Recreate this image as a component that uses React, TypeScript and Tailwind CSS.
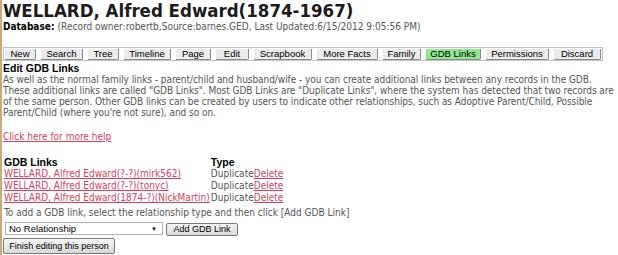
// @ts-nocheck
import React from 'react';

const tabs = [
  { label: 'New', w: 'w-[31px]' },
  { label: 'Search', w: 'w-[42px]' },
  { label: 'Tree', w: 'w-[31px]' },
  { label: 'Timeline', w: 'w-[47px]' },
  { label: 'Page', w: 'w-[35px]' },
  { label: 'Edit', w: 'w-[33px]' },
  { label: 'Scrapbook', w: 'w-[58px]' },
  { label: 'More Facts', w: 'w-[61px]' },
  { label: 'Family', w: 'w-[38px]' },
  { label: 'GDB Links', w: 'w-[55px]' },
  { label: 'Permissions', w: 'w-[63px]' },
  { label: 'Discard', w: 'w-[47px]' },
];

const links = [
  'WELLARD, Alfred Edward(?-?)(mirk562)',
  'WELLARD, Alfred Edward(?-?)(tonyc)',
  'WELLARD, Alfred Edward(1874-?)(NickMartin)',
];

const tahoma = 'font-["DejaVu_Sans_Condensed","DejaVu_Sans",sans-serif]';
const arial = 'font-["Liberation_Sans",Arial,sans-serif]';

const App: React.FC = () => {
  return (
    <div className="w-[618px] h-[255px] bg-white overflow-hidden border-l-2 border-[#c9aa78] pl-[1px] text-black">
      <h1 className={`${tahoma} font-bold text-[18.5px] leading-[20px] text-[#1c1c1c] pt-[1px]`}>
        WELLARD, Alfred Edward(1874-1967)
      </h1>
      <div className={`${tahoma} text-[10px] leading-[12px] whitespace-nowrap`}>
        <span className="font-bold text-black">Database: </span>
        <span className="text-[#555]">(Record owner:robertb,Source:barnes.GED, Last Updated:6/15/2012 9:05:56 PM)</span>
      </div>

      <div className={`${arial} mt-[14px] w-[600px] h-[14px] flex gap-[5px] pl-[1px] pt-[1px] border border-[#c4c4c4] text-[9.5px] leading-[10px]`}>
        {tabs.map((t) => (
          <span
            key={t.label}
            className={`${t.w} h-[11px] text-center whitespace-nowrap border-r border-b border-[#8a8a8a] rounded-br-[2px] ${
              t.label === 'GDB Links' ? 'bg-[#8fe88f]' : 'bg-[#ebebeb]'
            }`}
          >
            {t.label}
          </span>
        ))}
      </div>

      <h2 className={`${arial} font-bold text-[10.5px] leading-[12px] mt-[1px]`}>Edit GDB Links</h2>
      <p className={`${tahoma} text-[10px] leading-[11px] tracking-[-0.05px] text-[#555] whitespace-nowrap`}>
        As well as the normal family links - parent/child and husband/wife - you can create additional links between any records in the GDB.
        <br />
        These additional links are called "GDB Links". Most GDB Links are "Duplicate Links", where the system has detected that two records are
        <br />
        of the same person. Other GDB links can be created by users to indicate other relationships, such as Adoptive Parent/Child, Possible
        <br />
        Parent/Child (where you're not sure), and so on.
      </p>
      <div className={`${tahoma} text-[10px] leading-[11px] mt-[13px]`}>
        <a className="text-[#d8405a] underline">Click here for more help</a>
      </div>

      <table className={`${tahoma} text-[10px] leading-[12px] mt-[14px] ml-[1px] border-collapse`}>
        <thead>
          <tr className={`${arial} text-[10.5px] font-bold`}>
            <td className="pr-[1px]">GDB Links</td>
            <td>Type</td>
          </tr>
        </thead>
        <tbody>
          {links.map((l) => (
            <tr key={l}>
              <td className="pr-[1px] whitespace-nowrap">
                <a className="text-[#d8405a] underline">{l}</a>
              </td>
              <td className="text-[#555] whitespace-nowrap">
                Duplicate<a className="text-[#d8405a] underline">Delete</a>
              </td>
            </tr>
          ))}
        </tbody>
      </table>
      <div className={`${tahoma} text-[10px] leading-[13px] text-[#555] ml-[1px] mt-[2px] whitespace-nowrap`}>
        To add a GDB link, select the relationship type and then click [Add GDB Link]
      </div>
      <div className={`${arial} flex items-start gap-[3px] text-[9.5px] leading-[11px] mt-[3px] ml-[2px]`}>
        <div className="w-[158px] h-[13px] border border-[#b5b5b5] flex items-center justify-between pl-[3px] pr-[5px]">
          <span>No Relationship</span>
          <span className="text-[6px] leading-[6px]">▼</span>
        </div>
        <button className="h-[13px] mt-[1px] w-[72px] text-[9px] border border-[#7a7a7a] rounded-[2px] bg-gradient-to-b from-[#f6f6f6] to-[#d9d9d9] leading-[11px]">
          Add GDB Link
        </button>
      </div>
      <button className={`${arial} block text-[9px] leading-[13px] w-[112px] h-[16px] mt-[2px] border border-[#7a7a7a] rounded-[2px] bg-gradient-to-b from-[#f6f6f6] to-[#d9d9d9]`}>
        Finish editing this person
      </button>
    </div>
  );
};

export default App;
